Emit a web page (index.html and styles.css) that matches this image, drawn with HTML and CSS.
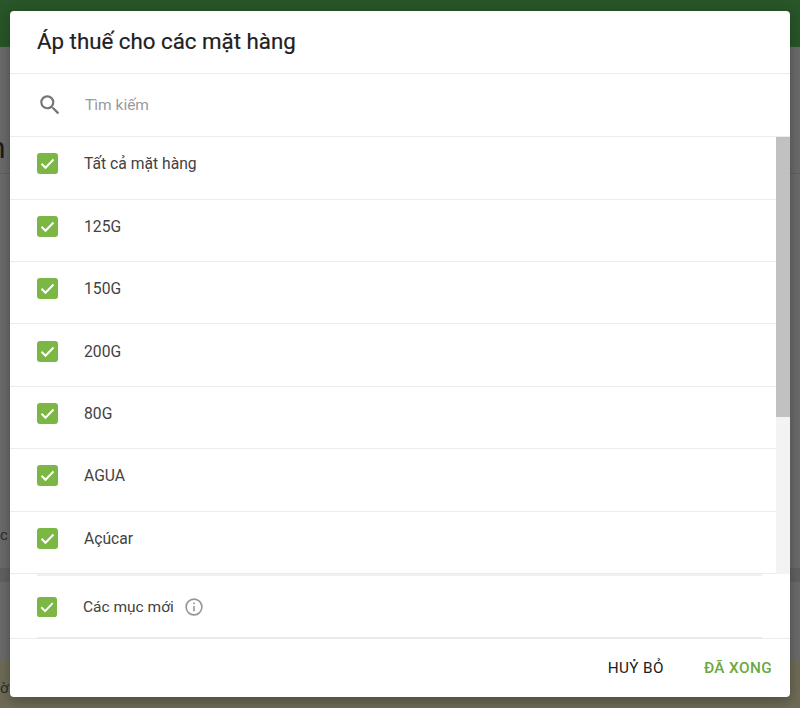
FILE: index.html
```html
<!DOCTYPE HTML>
<html lang="vi">
<head>
<meta charset="utf-8">
<title>Áp thuế cho các mặt hàng</title>
<link rel="stylesheet" href="styles.css">
</head>
<body>
	<div class="page">
		<div class="topBar"></div>
		<div class="pageBody">
			<div class="behindRow behindRowFirst"><span class="behindBig">n</span></div>
			<div class="behindRow behindRowSecond"><span class="behindSmall">c</span></div>
		</div>
		<div class="bottomBar"><span class="behindSmall">ờ</span></div>
	</div>

	<div class="dialog">
		<h1 class="dialogTitle">Áp thuế cho các mặt hàng</h1>

		<div class="searchRow">
			<svg class="searchIcon" viewBox="0 0 24 24" width="26" height="26"><path d="M15.5 14h-.79l-.28-.27A6.47 6.47 0 0 0 16 9.5 6.5 6.5 0 1 0 9.5 16c1.61 0 3.09-.59 4.23-1.57l.27.28v.79l5 4.99L20.49 19l-4.99-5zm-6 0C7.01 14 5 11.99 5 9.5S7.01 5 9.5 5 14 7.01 14 9.5 11.99 14 9.5 14z"/></svg>
			<span class="searchText">Tìm kiếm</span>
		</div>

		<div class="listWrap">
			<ul class="itemList">
				<li class="item"><svg class="check" viewBox="0 0 21 21"><rect width="21" height="21" rx="3"/><path d="M4.5 10.8l4 4 8-8.3"/></svg><span>Tất cả mặt hàng</span></li>
				<li class="item"><svg class="check" viewBox="0 0 21 21"><rect width="21" height="21" rx="3"/><path d="M4.5 10.8l4 4 8-8.3"/></svg><span>125G</span></li>
				<li class="item"><svg class="check" viewBox="0 0 21 21"><rect width="21" height="21" rx="3"/><path d="M4.5 10.8l4 4 8-8.3"/></svg><span>150G</span></li>
				<li class="item"><svg class="check" viewBox="0 0 21 21"><rect width="21" height="21" rx="3"/><path d="M4.5 10.8l4 4 8-8.3"/></svg><span>200G</span></li>
				<li class="item"><svg class="check" viewBox="0 0 21 21"><rect width="21" height="21" rx="3"/><path d="M4.5 10.8l4 4 8-8.3"/></svg><span>80G</span></li>
				<li class="item"><svg class="check" viewBox="0 0 21 21"><rect width="21" height="21" rx="3"/><path d="M4.5 10.8l4 4 8-8.3"/></svg><span>AGUA</span></li>
				<li class="item"><svg class="check" viewBox="0 0 21 21"><rect width="21" height="21" rx="3"/><path d="M4.5 10.8l4 4 8-8.3"/></svg><span>Açúcar</span></li>
			</ul>
			<div class="scrollTrack"><div class="scrollThumb"></div></div>
		</div>

		<div class="newItems">
			<svg class="check checkSmall" viewBox="0 0 21 21"><rect width="21" height="21" rx="3"/><path d="M4.5 10.8l4 4 8-8.3"/></svg>
			<span>Các mục mới</span>
			<svg class="infoIcon" viewBox="0 0 18 18" width="18" height="18"><circle cx="9" cy="9" r="7.9"/><path d="M9 8v5.2M9 4.6v1.6"/></svg>
		</div>

		<div class="dialogFoot">
			<a href="#" class="btn">HUỶ BỎ</a>
			<a href="#" class="btn btnDone">ĐÃ XONG</a>
		</div>
	</div>
</body>
</html>
```

FILE: styles.css
```css
* {
	margin: 0;
	padding: 0;
	box-sizing: border-box;
}

html, body {
	height: 708px;
	overflow: hidden;
}

body {
	position: relative;
	font-family: Roboto, "Liberation Sans", "Noto Sans CJK SC", sans-serif;
	color: #424242;
	background: #696969;
}

/****页面背景*****/
.page {
	display: flex;
	flex-direction: column;
	height: 708px;
}

.topBar {
	height: 47px;
	background: #285628;
}

.pageBody {
	flex: 1;
	background: #6b6b6b;
	overflow: hidden;
}

.behindRow {
	overflow: hidden;
	border-bottom: 1px solid #5f5f5f;
	white-space: nowrap;
}

.behindRowFirst {
	height: 127px;
	padding-top: 83px;
}

.behindRowSecond {
	height: 408px;
	padding-top: 351px;
	border-bottom: 14px solid #616161;
}

.behindBig {
	display: block;
	margin-left: -11px;
	font-size: 30px;
	line-height: 36px;
	color: #1c1c1c;
}

.behindSmall {
	font-size: 15px;
	color: #2c2c2c;
}

.bottomBar {
	height: 46px;
	padding-top: 16px;
	background: #6e6c56;
	white-space: nowrap;
}

/****弹出框*****/
.dialog {
	position: absolute;
	left: 10px;
	top: 11px;
	width: 780px;
	height: 686px;
	display: flex;
	flex-direction: column;
	background: #fff;
	border-radius: 4px;
	box-shadow: 0 4px 14px rgba(0, 0, 0, .3);
	overflow: hidden;
}

.dialogTitle {
	height: 63px;
	padding: 15px 0 0 27px;
	font-size: 22.3px;
	line-height: 30px;
	font-weight: 400;
	color: #212121;
	-webkit-text-stroke: .2px #212121;
	border-bottom: 1px solid #ececec;
}

.searchRow {
	display: flex;
	align-items: center;
	height: 63px;
	padding-left: 27px;
	border-bottom: 1px solid #ececec;
}

.searchIcon {
	fill: #757575;
}

.searchText {
	margin-left: 22px;
	font-size: 15.5px;
	color: #9a9a9a;
}

.listWrap {
	display: flex;
	height: 437px;
	overflow: hidden;
}

.itemList {
	flex: 1;
	padding-top: .2px;
	list-style: none;
}

.item {
	display: flex;
	align-items: center;
	height: 62.4px;
	padding: 0 0 8px 27px;
	font-size: 15.7px;
	border-bottom: 1px solid #ececec;
}

.item span {
	margin-left: 26px;
}

.check {
	flex: none;
	width: 21px;
	height: 21px;
}

.check rect {
	fill: #7cb644;
}

.check path {
	fill: none;
	stroke: #fff;
	stroke-width: 2;
}

.checkSmall {
	width: 20px;
	height: 20px;
}

.scrollTrack {
	width: 14px;
	height: 437px;
	background: #f3f3f3;
}

.scrollThumb {
	height: 280px;
	background: #c1c1c1;
}

.newItems {
	display: flex;
	align-items: center;
	height: 64px;
	margin: 0 28px 0 27px;
	font-size: 15.5px;
	border-top: 2px solid #f0f0f0;
	border-bottom: 1px solid #e8e8e8;
}

.newItems span {
	margin-left: 26px;
}

.infoIcon {
	margin-left: 11px;
}

.infoIcon circle, .infoIcon path {
	fill: none;
	stroke: #969696;
	stroke-width: 1.6;
}

.dialogFoot {
	flex: 1;
	display: flex;
	justify-content: flex-end;
	align-items: center;
	gap: 40px;
	padding: 0 18px 1px 0;
	border-top: 1px solid #ececec;
}

.btn {
	font-size: 15.3px;
	letter-spacing: .4px;
	color: #212121;
	text-decoration: none;
}

.btnDone {
	font-weight: 500;
	color: #6aa842;
}
```
